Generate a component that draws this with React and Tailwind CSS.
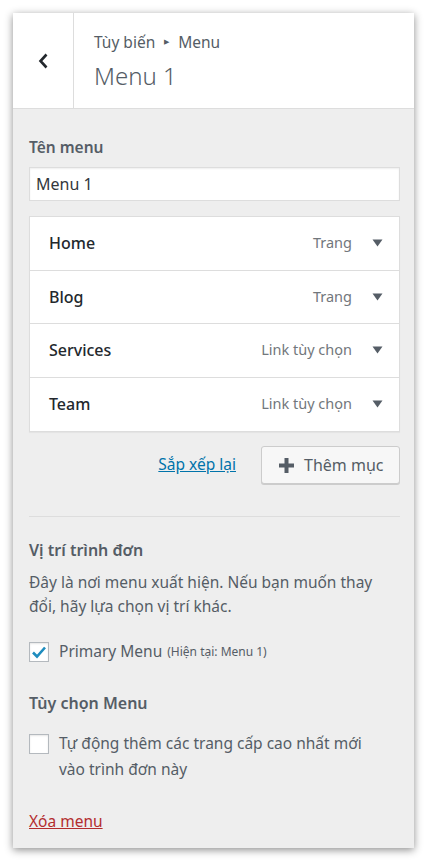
import React from "react";

const font = { fontFamily: '"Noto Sans", "Open Sans", sans-serif' };

function Tri() {
  return (
    <svg width="11" height="8" viewBox="0 0 11 8" className="shrink-0">
      <path d="M0.5 0.5 L10.5 0.5 L5.5 7.5 Z" fill="#555d66" />
    </svg>
  );
}

function Row({ name, type, last }) {
  return (
    <div className={"flex items-center h-[53.5px] pl-[19px] pr-[16px] " + (last ? "" : "border-b border-[#dddddd]")}>
      <span className="text-[16px] font-medium text-[#23282d] flex-1">{name}</span>
      <span className="text-[14.5px] text-[#72777c] mr-[20px]">{type}</span>
      <Tri />
    </div>
  );
}

function CheckBox({ checked }) {
  return (
    <div className="w-[20px] h-[20px] bg-white border border-[#b4b9be] shadow-[inset_0_1px_2px_rgba(0,0,0,0.1)] flex items-center justify-center shrink-0">
      {checked && (
        <svg width="16" height="14" viewBox="0 0 16 14">
          <path d="M2 7.5 L6 11.5 L14 2.5" stroke="#1e8cbe" strokeWidth="2.6" fill="none" />
        </svg>
      )}
    </div>
  );
}

export default function App() {
  return (
    <div className="w-[429px] h-[863px] bg-white pt-[13px] pl-[13px]" style={font}>
      <div className="w-[401px] h-[835px] bg-[#eeeeee] shadow-[0_2px_8px_rgba(0,0,0,0.45)] flex flex-col">
        <div className="h-[96px] bg-white border-b border-[#dddddd] flex shrink-0">
          <div className="w-[61px] border-r border-[#dddddd] flex items-center justify-center">
            <svg width="13" height="18" viewBox="0 0 13 18">
              <path d="M9.5 2.5 L3.5 9 L9.5 15.5" stroke="#23282d" strokeWidth="2.6" fill="none" />
            </svg>
          </div>
          <div className="pl-[20px] pt-[17px]">
            <div className="text-[15.5px] text-[#555d66] leading-[24px] flex items-center">
              <span>Tùy biến</span>
              <span className="text-[7px] mx-[9px] text-[#555d66]">▶</span>
              <span>Menu</span>
            </div>
            <div className="text-[24px] font-light text-[#555d66] leading-[32px] mt-[6px]">Menu 1</div>
          </div>
        </div>

        <div className="pl-[16px] pr-[14px] pt-[28px]">
          <div className="text-[15.5px] font-semibold text-[#555d66] leading-[20px]">Tên menu</div>
          <div className="mt-[10px] h-[34px] bg-white border border-[#dddddd] shadow-[inset_0_1px_2px_rgba(0,0,0,0.07)] flex items-center pl-[6px] text-[16px] text-[#32373c]">
            Menu 1
          </div>

          <div className="mt-[15px] bg-white border border-[#dddddd] shadow-[0_1px_1px_rgba(0,0,0,0.04)]">
            <Row name="Home" type="Trang" />
            <Row name="Blog" type="Trang" />
            <Row name="Services" type="Link tùy chọn" />
            <Row name="Team" type="Link tùy chọn" last />
          </div>

          <div className="mt-[14px] flex items-center justify-end">
            <span className="text-[15.5px] text-[#0073aa] underline mr-[25px]">Sắp xếp lại</span>
            <div className="h-[38px] w-[139px] bg-[#f7f7f7] border border-[#cccccc] rounded-[3px] shadow-[0_1px_0_#cccccc] flex items-center pl-[17px]">
              <svg width="15" height="15" viewBox="0 0 15 15" className="mr-[10px]">
                <rect x="5.5" y="0" width="4" height="15" fill="#555d66" />
                <rect x="0" y="5.5" width="15" height="4" fill="#555d66" />
              </svg>
              <span className="text-[16px] text-[#555d66]">Thêm mục</span>
            </div>
          </div>

          <div className="mt-[32px] border-t border-[#dddddd]" />

          <div className="mt-[21px] text-[16px] font-semibold text-[#555d66] leading-[24px]">Vị trí trình đơn</div>
          <div className="mt-[8px] text-[15.5px] text-[#555d66] leading-[24px]">
            Đây là nơi menu xuất hiện. Nếu bạn muốn thay đổi, hãy lựa chọn vị trí khác.
          </div>
          <div className="mt-[22px] flex items-center">
            <CheckBox checked />
            <span className="ml-[10px] text-[15.5px] text-[#555d66]">Primary Menu</span>
            <span className="ml-[5px] text-[12px] text-[#555d66]">(Hiện tại: Menu 1)</span>
          </div>

          <div className="mt-[28px] text-[16px] font-semibold text-[#555d66] leading-[24px]">Tùy chọn Menu</div>
          <div className="mt-[17px] flex items-start">
            <div className="mt-[2px]"><CheckBox /></div>
            <span className="ml-[10px] w-[322px] text-[15.5px] text-[#555d66] leading-[26px] -mt-[2px]">
              Tự động thêm các trang cấp cao nhất mới vào trình đơn này
            </span>
          </div>

          <div className="mt-[28px] text-[15.5px] text-[#b32d2e] underline">Xóa menu</div>
        </div>
      </div>
    </div>
  );
}
